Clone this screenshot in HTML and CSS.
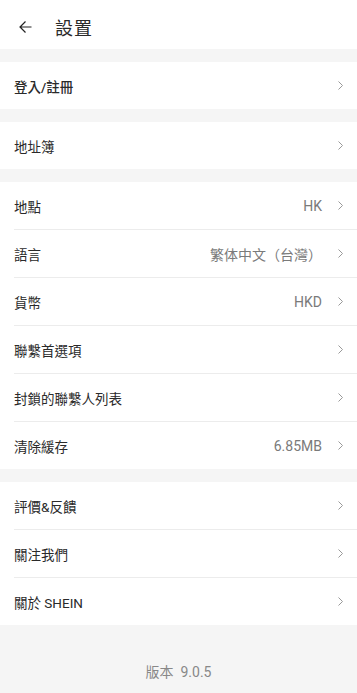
FILE: index.html
```html
<!DOCTYPE html>
<html lang="zh-Hant">
<head>
    <meta charset="UTF-8">
    <meta name="viewport" content="width=device-width, initial-scale=1.0">
    <title>設置</title>
    <link rel="stylesheet" href="styles.css">
</head>
<body>
    <header class="header">
        <svg class="back" width="13" height="12" viewBox="0 0 13 12">
            <path d="M12.5 6H1M6.5 0.5L1 6 6.5 11.5" fill="none" stroke="#222" stroke-width="1.2"/>
        </svg>
        <h1>設置</h1>
    </header>

    <div class="gap"></div>
    <ul class="group">
        <li class="row"><span class="label strong">登入/註冊</span><svg class="chev" viewBox="0 0 5 9"><path d="M0.5 0.5L4.5 4.5 0.5 8.5"/></svg></li>
    </ul>

    <div class="gap"></div>
    <ul class="group">
        <li class="row"><span class="label">地址簿</span><svg class="chev" viewBox="0 0 5 9"><path d="M0.5 0.5L4.5 4.5 0.5 8.5"/></svg></li>
    </ul>

    <div class="gap"></div>
    <ul class="group">
        <li class="row"><span class="label">地點</span><span class="value">HK</span><svg class="chev" viewBox="0 0 5 9"><path d="M0.5 0.5L4.5 4.5 0.5 8.5"/></svg></li>
        <li class="row"><span class="label">語言</span><span class="value">繁体中文（台灣）</span><svg class="chev" viewBox="0 0 5 9"><path d="M0.5 0.5L4.5 4.5 0.5 8.5"/></svg></li>
        <li class="row"><span class="label">貨幣</span><span class="value">HKD</span><svg class="chev" viewBox="0 0 5 9"><path d="M0.5 0.5L4.5 4.5 0.5 8.5"/></svg></li>
        <li class="row"><span class="label">聯繫首選項</span><svg class="chev" viewBox="0 0 5 9"><path d="M0.5 0.5L4.5 4.5 0.5 8.5"/></svg></li>
        <li class="row"><span class="label">封鎖的聯繫人列表</span><svg class="chev" viewBox="0 0 5 9"><path d="M0.5 0.5L4.5 4.5 0.5 8.5"/></svg></li>
        <li class="row"><span class="label">清除緩存</span><span class="value">6.85MB</span><svg class="chev" viewBox="0 0 5 9"><path d="M0.5 0.5L4.5 4.5 0.5 8.5"/></svg></li>
    </ul>

    <div class="gap"></div>
    <ul class="group">
        <li class="row"><span class="label">評價&amp;反饋</span><svg class="chev" viewBox="0 0 5 9"><path d="M0.5 0.5L4.5 4.5 0.5 8.5"/></svg></li>
        <li class="row"><span class="label">關注我們</span><svg class="chev" viewBox="0 0 5 9"><path d="M0.5 0.5L4.5 4.5 0.5 8.5"/></svg></li>
        <li class="row"><span class="label">關於 SHEIN</span><svg class="chev" viewBox="0 0 5 9"><path d="M0.5 0.5L4.5 4.5 0.5 8.5"/></svg></li>
    </ul>

    <footer class="footer">版本&nbsp;&nbsp;9.0.5</footer>
</body>
</html>
```

FILE: styles.css
```css
:root {
    --bg-grey: #f5f5f5;
    --text: #2a2a2a;
    --muted: #7a7a7a;
    --line: #ececec;
}

* {
    margin: 0;
    padding: 0;
    box-sizing: border-box;
}

body {
    font-family: Roboto, "Noto Sans CJK TC", sans-serif;
    background: var(--bg-grey);
    color: var(--text);
    min-height: 100vh;
}

.header {
    height: 49px;
    background: #fff;
    display: flex;
    align-items: center;
    padding: 5px 0 0 19px;
}

.back {
    margin-right: 23px;
}

.header h1 {
    font-size: 18px;
    font-weight: 400;
    letter-spacing: 1px;
}

.gap {
    height: 13px;
}

.group {
    list-style: none;
    background: #fff;
}

.row {
    height: 47px;
    display: flex;
    align-items: center;
    padding: 0 14px;
}

.row + .row {
    height: 48px;
    border-top: 1px solid var(--line);
    margin-left: 14px;
    padding-left: 0;
}

.label {
    flex: 1;
    font-size: 13.5px;
}

.label.strong {
    font-weight: 500;
}

.value {
    font-size: 14px;
    color: var(--muted);
    margin-right: 16px;
}

.chev {
    width: 5px;
    height: 9px;
    fill: none;
    stroke: #999;
    stroke-width: 1;
}

.footer {
    text-align: center;
    font-size: 14px;
    color: #888;
    padding: 36px 0 0;
}
```
